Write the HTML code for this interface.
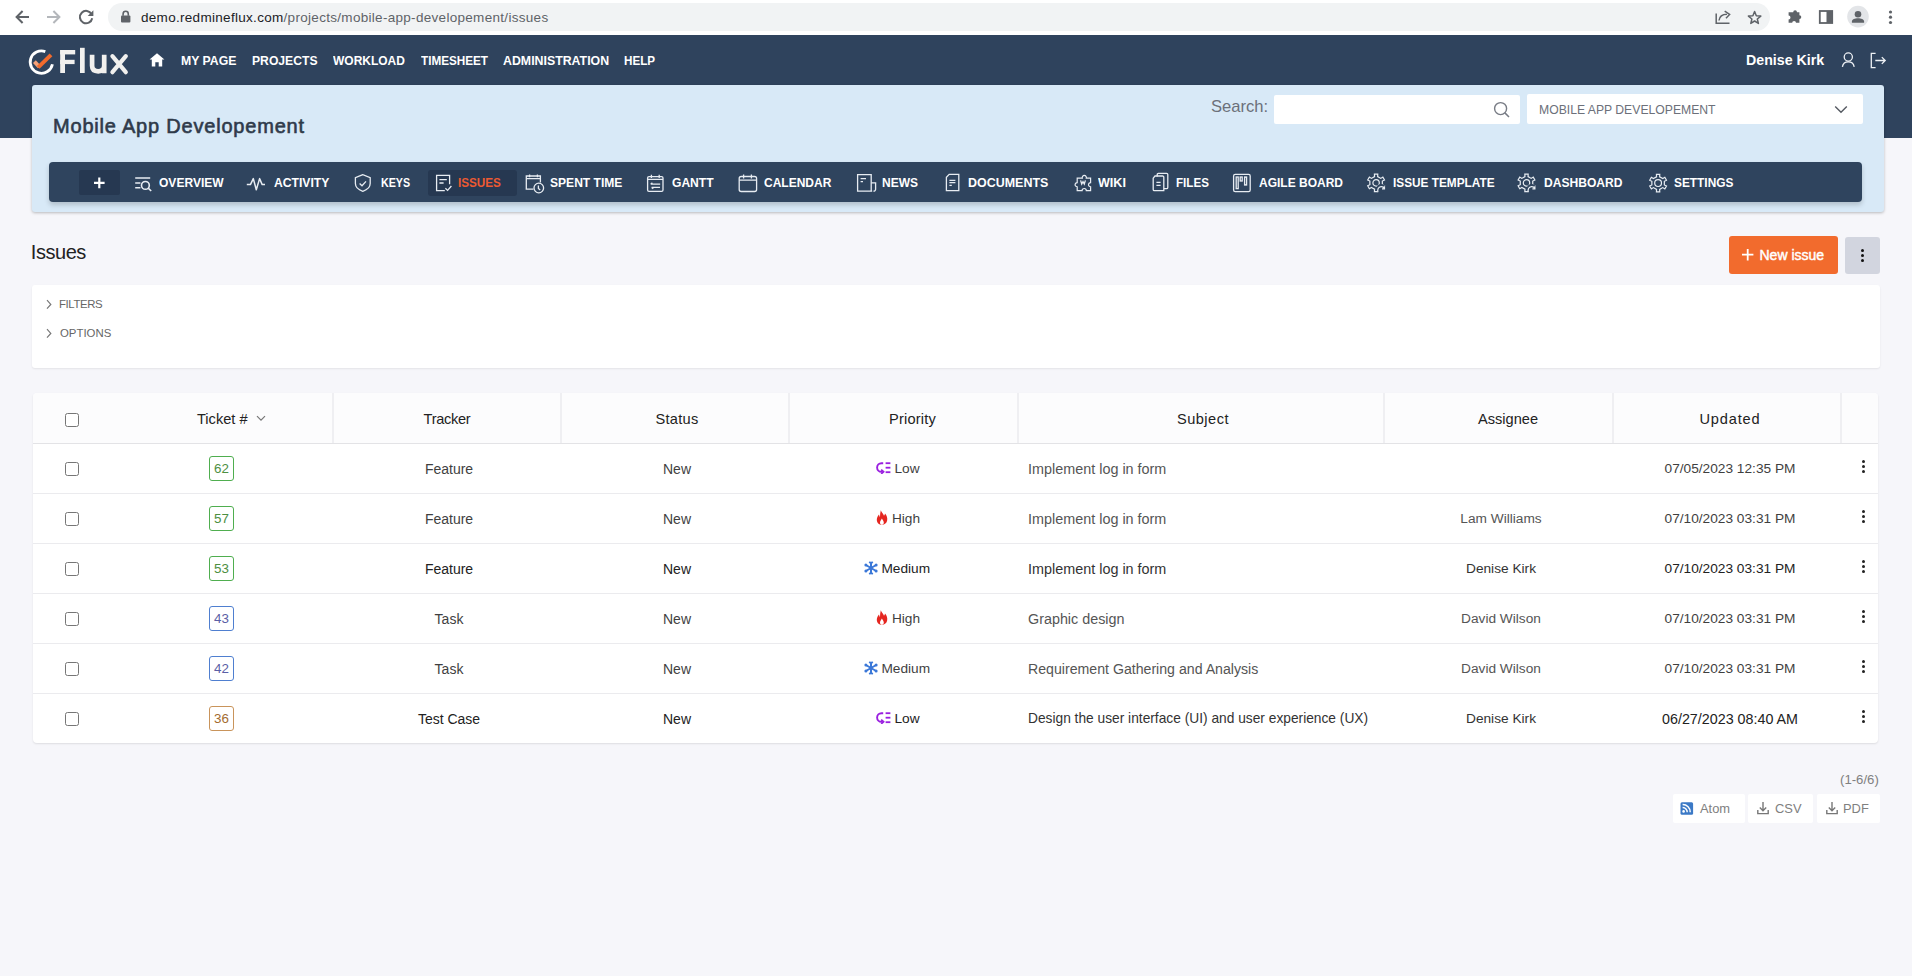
<!DOCTYPE html>
<html><head><meta charset="utf-8">
<style>
*{box-sizing:border-box;margin:0;padding:0}
html,body{width:1912px;height:976px;overflow:hidden}
body{background:#f6f6fa;font-family:"Liberation Sans",sans-serif;position:relative;color:#333}
.a{position:absolute}
.nw{white-space:nowrap}
/* browser chrome */
#chrome{left:0;top:0;width:1912px;height:35px;background:#fff}
#url{left:108px;top:3px;width:1662px;height:28px;background:#f1f3f4;border-radius:14px}
#urltxt{left:141px;top:9.5px;font-size:13.5px;color:#5f6368;letter-spacing:0.3px}
#urltxt b{font-weight:normal;color:#202124}
/* header */
#hdr{left:0;top:35px;width:1912px;height:103px;background:#2f435d}
.nav{transform-origin:0 0;top:53px;font-size:13.3px;font-weight:bold;color:#fff;letter-spacing:0}
/* panel */
#panel{left:32px;top:85px;width:1852px;height:127px;background:#d8e9f7;border-radius:3px;box-shadow:0 1px 3px rgba(0,0,0,.25)}
#ptitle{left:53px;top:115px;font-size:20px;font-weight:normal;color:#2f3a4a;-webkit-text-stroke:0.6px #2f3a4a;letter-spacing:0.8px}
#slabel{left:1211px;top:97.3px;font-size:16.6px;color:#6c707a}
#sinput{left:1274px;top:95px;width:246px;height:29px;background:#fff;border-radius:2px}
#sel{left:1527px;top:94px;width:336px;height:30px;background:#fff;border-radius:2px}
#seltxt{left:1539px;top:103px;font-size:12.2px;color:#6c707a}
#menu{left:49px;top:162px;width:1813px;height:40px;background:#2f445e;border-radius:4px;box-shadow:0 3px 5px rgba(0,0,0,.18)}
.mi{transform-origin:0 0;top:174.9px;font-size:13px;font-weight:bold;color:#fff}
.ic{stroke:#e8edf3;fill:none;stroke-width:1.3}
/* content */
#title{left:30.8px;top:240.6px;font-size:20px;color:#222;letter-spacing:-0.45px}
#newbtn{left:1729px;top:236px;width:109px;height:38px;background:#f26b2d;border-radius:3px}
#kebbtn{left:1844.5px;top:237px;width:35.5px;height:37px;background:#d2d5df;border-radius:3px}
#filters{left:32px;top:285px;width:1848px;height:83px;background:#fff;border-radius:3px;box-shadow:0 1px 2px rgba(0,0,0,.08)}
.flt{font-size:11.4px;color:#666}
/* table */
#tbl{left:33px;top:393px;width:1845px;height:350px;background:#fff;border-radius:4px;box-shadow:0 1px 2px rgba(0,0,0,.1)}
#thead{left:33px;top:393px;width:1845px;height:51px;background:#fcfcfd;border-bottom:1px solid #e3e3e6;border-radius:4px 4px 0 0}
.sep{top:393px;width:2px;height:50px;background:#efeff2}
.rowline{left:33px;width:1845px;height:1px;background:#ebebee}
.th{top:411px;font-size:14.6px;color:#222;text-align:center}
.row{left:33px;width:1845px;height:50px}
.td{top:0.6px;height:50px;line-height:50px;font-size:13.7px;color:#333;text-align:center;white-space:nowrap}
.sj{text-align:left;font-size:14.1px}
.cb{width:13.5px;height:13.5px;border:1.25px solid #767676;border-radius:2.5px;background:#fff}
.badge{width:25px;height:25px;border:1px solid;border-radius:3px;font-size:13.4px;text-align:center;line-height:23px}
.kb{width:3px}
.kb i{display:block;width:3px;height:3px;border-radius:50%;background:#222;margin-bottom:2px}
.foot{font-size:12.5px;color:#808080}
.fbtn{top:794px;height:29px;background:#fff;border-radius:2px}
</style></head><body>

<!-- browser chrome -->
<div id="chrome" class="a"></div>
<div id="url" class="a"></div>
<div id="urltxt" class="a nw"><b>demo.redmineflux.com</b>/projects/mobile-app-developement/issues</div>

<!-- header -->
<div id="hdr" class="a"></div>
<div id="t1" class="a nav nw" style="left:181.40px;transform:scaleX(0.9217)">MY PAGE</div>
<div id="t2" class="a nav nw" style="left:251.80px;transform:scaleX(0.9144)">PROJECTS</div>
<div id="t3" class="a nav nw" style="left:333.20px;transform:scaleX(0.9012)">WORKLOAD</div>
<div id="t4" class="a nav nw" style="left:420.79px;transform:scaleX(0.8806)">TIMESHEET</div>
<div id="t5" class="a nav nw" style="left:503.40px;transform:scaleX(0.9288)">ADMINISTRATION</div>
<div id="t6" class="a nav nw" style="left:624.43px;transform:scaleX(0.8760)">HELP</div>
<div class="a nw" style="left:1746px;top:52px;font-size:14.2px;font-weight:bold;color:#fff">Denise Kirk</div>

<!-- panel -->
<div id="panel" class="a"></div>
<div id="ptitle" class="a nw">Mobile App Developement</div>
<div id="slabel" class="a nw">Search:</div>
<div id="sinput" class="a"></div>
<div id="sel" class="a"></div>
<div id="seltxt" class="a nw">MOBILE APP DEVELOPEMENT</div>
<div id="menu" class="a"></div>
<div class="a" style="left:79px;top:170px;width:41px;height:25px;background:#263851;border-radius:2px"></div>
<div class="a" style="left:428px;top:170px;width:89px;height:26px;background:#263851;border-radius:3px"></div>
<div id="t7" class="a mi nw" style="left:159.30px;transform:scaleX(0.9259)">OVERVIEW</div>
<div id="t8" class="a mi nw" style="left:274.46px;transform:scaleX(0.9336)">ACTIVITY</div>
<div id="t9" class="a mi nw" style="left:380.52px;transform:scaleX(0.8234)">KEYS</div>
<div id="t10" class="a mi nw" style="left:457.71px;transform:scaleX(0.9000);color:#ec5a32">ISSUES</div>
<div id="t11" class="a mi nw" style="left:550.00px;transform:scaleX(0.9282)">SPENT TIME</div>
<div id="t12" class="a mi nw" style="left:672.40px;transform:scaleX(0.9293)">GANTT</div>
<div id="t13" class="a mi nw" style="left:764.23px;transform:scaleX(0.9235)">CALENDAR</div>
<div id="t14" class="a mi nw" style="left:882.00px;transform:scaleX(0.9231)">NEWS</div>
<div id="t15" class="a mi nw" style="left:968.00px;transform:scaleX(0.9595)">DOCUMENTS</div>
<div id="t16" class="a mi nw" style="left:1098.00px;transform:scaleX(0.9655)">WIKI</div>
<div id="t17" class="a mi nw" style="left:1176.00px;transform:scaleX(0.8925)">FILES</div>
<div id="t18" class="a mi nw" style="left:1259.00px;transform:scaleX(0.9231)">AGILE BOARD</div>
<div id="t19" class="a mi nw" style="left:1393.00px;transform:scaleX(0.9089)">ISSUE TEMPLATE</div>
<div id="t20" class="a mi nw" style="left:1544.14px;transform:scaleX(0.9287)">DASHBOARD</div>
<div id="t21" class="a mi nw" style="left:1673.53px;transform:scaleX(0.9130)">SETTINGS</div>

<!-- chrome icons -->
<svg class="a" style="left:0;top:0" width="1912" height="35" viewBox="0 0 1912 35">
 <g fill="none" stroke="#5f6368" stroke-width="2" stroke-linecap="butt">
  <path d="M29 17H17.2M22.6 11L16.6 17L22.6 23"/>
  <path d="M47 17H58.8M53.4 11L59.4 17L53.4 23" stroke="#b4b7bb"/>
  <path d="M91.6 14.2A6.2 6.2 0 1 0 92.2 18.2"/>
 </g>
 <path d="M93.4 10.3V16H87.7Z" fill="#5f6368"/>
 <rect x="121" y="15.6" width="9.4" height="6.8" rx="1" fill="#5f6368"/>
 <path d="M123.1 15.8V13.9A2.6 2.6 0 0 1 128.3 13.9V15.8" fill="none" stroke="#5f6368" stroke-width="1.6"/>
 <g fill="none" stroke="#5f6368" stroke-width="1.5">
  <path d="M1716.2 13.5V23.2H1729.5"/>
  <path d="M1719 20.5C1719.5 16 1722.5 14.2 1727 14.2M1724.7 11.2L1729.6 14.4L1726 18.2"/>
  <path d="M1754.6 11.5L1756.3 15.8L1760.8 16.1L1757.3 19L1758.4 23.4L1754.6 21L1750.8 23.4L1751.9 19L1748.4 16.1L1752.9 15.8Z" stroke-linejoin="round"/>
 </g>
 <path d="M1791 12.2H1793.2A1.9 1.9 0 0 1 1797 12.2H1799.4V15.2A1.9 1.9 0 0 1 1799.4 19V22.8H1796A1.9 1.9 0 0 0 1792.2 22.8H1788.6V19.4A1.9 1.9 0 0 0 1788.6 15.6V12.2Z" fill="#5f6368"/>
 <rect x="1819.8" y="11" width="12.4" height="12" fill="none" stroke="#5f6368" stroke-width="1.8"/>
 <rect x="1826.5" y="11" width="6" height="12" fill="#5f6368"/>
 <circle cx="1858" cy="16.6" r="10.8" fill="#e3e5e8"/>
 <circle cx="1858" cy="14.2" r="3.3" fill="#5f6368"/>
 <path d="M1851.9 22.7V21.6C1851.9 19.2 1855 18.3 1858 18.3C1861 18.3 1864.1 19.2 1864.1 21.6V22.7Z" fill="#5f6368"/>
 <circle cx="1890.5" cy="12" r="1.6" fill="#5f6368"/>
 <circle cx="1890.5" cy="17.2" r="1.6" fill="#5f6368"/>
 <circle cx="1890.5" cy="22.5" r="1.6" fill="#5f6368"/>
</svg>

<!-- logo -->
<svg class="a" style="left:0;top:35px" width="680" height="50" viewBox="0 35 680 50">
 <path d="M45.3 51.6A11.2 11.2 0 1 0 52.4 64.2" fill="none" stroke="#fff" stroke-width="2.8"/>
 <path d="M34.4 61.6L39.4 67" stroke="#f5a27a" stroke-width="3.9" fill="none"/>
 <path d="M38.2 67.4L51 54.8" stroke="#f26b2d" stroke-width="3.9" fill="none"/>
 <g fill="#f1f0ee">
  <rect x="60.2" y="50" width="4.8" height="23"/>
  <rect x="60.2" y="50" width="15" height="4.4"/>
  <rect x="60.2" y="59.8" width="14.4" height="4.3"/>
  <rect x="80" y="47.8" width="4.7" height="25.2"/>
 </g>
 <path d="M92.1 54.8V65.8C92.1 69.5 94.3 71.3 98.2 71.3C102 71.3 104.2 69.5 104.2 65.8V54.8M104.2 60V73.2" fill="none" stroke="#f1f0ee" stroke-width="4.7"/>
 <path d="M112.4 56.2L125.8 72.2M125.8 56.2L112.4 72.2" fill="none" stroke="#f1f0ee" stroke-width="4.2" stroke-linecap="round"/>
 <path d="M157 53.3L149.6 59.6H151.8V66.4H155.3V62.2H158.7V66.4H162.2V59.6H164.4Z" fill="#fff"/>
</svg>

<!-- user / logout -->
<svg class="a" style="left:1836px;top:48px" width="56" height="24" viewBox="1836 48 56 24">
 <g fill="none" stroke="#eef1f5" stroke-width="1.3">
  <circle cx="1848.3" cy="57" r="4.1"/>
  <path d="M1842.4 66.8A6 6 0 0 1 1854.2 66.8"/>
  <path d="M1875.6 53.3H1871.3V67.6H1875.6"/>
  <path d="M1875.3 60.5H1885.2M1881.8 57.1L1885.2 60.5L1881.8 63.9"/>
 </g>
</svg>

<!-- search & select icons -->
<svg class="a" style="left:1490px;top:98px" width="360" height="24" viewBox="1490 98 360 24">
 <circle cx="1500.6" cy="108.6" r="6" fill="none" stroke="#777b84" stroke-width="1.4"/>
 <path d="M1504.9 112.9L1509 117" stroke="#777b84" stroke-width="1.5"/>
 <path d="M1835.2 106.4L1841 112.2L1846.8 106.4" fill="none" stroke="#555a62" stroke-width="1.4"/>
</svg>

<!-- menu icons -->
<svg class="a" style="left:49px;top:162px" width="1813" height="40" viewBox="49 162 1813 40">
 <path d="M99.3 177.6V188.2M94 182.9H104.6" stroke="#fff" stroke-width="2.2"/>
 <g fill="none" stroke="#e7ecf2" stroke-width="1.3">
  <!-- overview -->
  <path d="M135.2 178H150.2M135.2 183H140.4M135.2 187.8H140.4" stroke-width="1.5"/>
  <circle cx="145.4" cy="185.4" r="3.9" stroke-width="1.6"/>
  <path d="M148.2 188.2L151.2 191" stroke-width="1.6"/>
  <!-- activity -->
  <path d="M246.8 184.6H250.4L253.3 178.6L256.3 189.8L259.6 178.6L262.2 184.6H265" stroke-width="1.5" stroke-linejoin="round"/>
  <!-- keys shield -->
  <path d="M362.8 174.6L355.4 177.6V183.6C355.4 187.4 358.8 190 362.8 191.3C366.8 190 370.2 187.4 370.2 183.6V177.6Z"/>
  <path d="M359.6 183.6L362 185.8L366 181.4"/>
  <!-- issues -->
  <path d="M444.8 190.6H436.6V175.4H449.6V184.2"/>
  <path d="M439.4 179.6H446.8M439.4 183H443.6"/>
  <path d="M445.4 188.2L447.6 190.4L451.4 186"/>
  <!-- spent time -->
  <path d="M533.4 189.2H526.3V176H540.4V182.6"/>
  <path d="M526.3 178.6H540.4M529.6 174.6V177.2M537.4 174.6V177.2"/>
  <circle cx="538.8" cy="188" r="4.8"/>
  <path d="M538.4 185.6V188.4L540.2 190"/>
  <!-- gantt -->
  <rect x="647.6" y="176.6" width="15.4" height="14.8" rx="1.4"/>
  <path d="M647.6 179.4H663M651.4 174.8V178M659.2 174.8V178"/>
  <path d="M650.6 184.2H660.2M651.6 187.4H660M652.4 182.9L650.6 184.2M651.6 187.4L653.3 188.7"/>
  <!-- calendar -->
  <rect x="739.2" y="176.5" width="17.4" height="15" rx="2"/>
  <path d="M739.2 180.2H756.6M743.6 174.4V178.4M751.4 174.4V178.4"/>
  <!-- news -->
  <path d="M872.2 191.2H857.6V174.6H871.2V191"/>
  <path d="M871.2 182.8H875.6V189.2A2 2 0 0 1 873.4 191.2"/>
  <path d="M860.6 178.6H866M860.6 181.6H863"/>
  <!-- documents -->
  <path d="M949.2 174.4H958.8V190.6H946.4V177.2Z"/>
  <path d="M949.4 180.4H955.4M949.4 182.6H955.4M949.4 185.4H951.8"/>
  <!-- wiki puzzle -->
  <path d="M1077.2 178.2H1082.3A2.1 2.1 0 1 1 1086.3 178.2H1090.6V182.6A2.1 2.1 0 1 0 1090.6 186.8V190.6H1086.3A2.1 2.1 0 1 0 1082.1 190.6H1077.2V186.8A2.1 2.1 0 1 1 1077.2 182.6Z" stroke-width="1.2"/>
  <path d="M1080.6 180.4L1081.7 184L1083 181.6L1084.3 184L1085.4 180.4" stroke-width="1.3"/>
  <!-- files -->
  <path d="M1157.2 176.4V174.6A1.2 1.2 0 0 1 1158.4 173.4H1166.6A1.2 1.2 0 0 1 1167.8 174.6V187.4A1.2 1.2 0 0 1 1166.6 188.6H1164"/>
  <path d="M1155 176H1162.6A1.2 1.2 0 0 1 1163.8 177.2V190.6H1154.4A1.2 1.2 0 0 1 1153.2 189.4V178.2Z"/>
  <path d="M1156.4 182.4H1160.6M1156.4 185.4H1160.6"/>
  <!-- agile -->
  <rect x="1233.6" y="174.4" width="16.6" height="17.2" rx="1.6"/>
  <rect x="1236.2" y="177" width="2" height="11.6"/>
  <rect x="1240.2" y="177" width="2" height="4"/>
  <rect x="1244.6" y="177" width="2" height="8"/>
 </g>
 <g fill="none" stroke="#e7ecf2" stroke-width="1.2">
  <g transform="translate(1366.6 173.4)"><path d="M7.95 3.19 L7.83 0.76 L11.17 0.76 L11.05 3.19 L14.19 5.00 L16.24 3.68 L17.90 6.57 L15.74 7.69 L15.74 11.31 L17.90 12.43 L16.24 15.32 L14.19 14.00 L11.05 15.81 L11.17 18.24 L7.83 18.24 L7.95 15.81 L4.81 14.00 L2.76 15.32 L1.10 12.43 L3.26 11.31 L3.26 7.69 L1.10 6.57 L2.76 3.68 L4.81 5.00Z"/><circle cx="9.5" cy="9.5" r="3.2"/><circle cx="14.6" cy="15.2" r="4.6" fill="#2f445e" stroke="none"/><path d="M11.4 18.6C10.6 16.2 11.6 13.4 14.4 13.2C16.2 13.1 17.4 14 17.8 15.2M17.9 12.8V15.4H15.4"/></g>
  <g transform="translate(1517 173.4)"><path d="M7.95 3.19 L7.83 0.76 L11.17 0.76 L11.05 3.19 L14.19 5.00 L16.24 3.68 L17.90 6.57 L15.74 7.69 L15.74 11.31 L17.90 12.43 L16.24 15.32 L14.19 14.00 L11.05 15.81 L11.17 18.24 L7.83 18.24 L7.95 15.81 L4.81 14.00 L2.76 15.32 L1.10 12.43 L3.26 11.31 L3.26 7.69 L1.10 6.57 L2.76 3.68 L4.81 5.00Z"/><circle cx="9.5" cy="9.5" r="3.2"/><circle cx="14.6" cy="15.2" r="4.6" fill="#2f445e" stroke="none"/><path d="M11.4 18.6C10.6 16.2 11.6 13.4 14.4 13.2C16.2 13.1 17.4 14 17.8 15.2M17.9 12.8V15.4H15.4"/></g>
  <g transform="translate(1648.6 173.6)"><path d="M7.95 3.19 L7.83 0.76 L11.17 0.76 L11.05 3.19 L14.19 5.00 L16.24 3.68 L17.90 6.57 L15.74 7.69 L15.74 11.31 L17.90 12.43 L16.24 15.32 L14.19 14.00 L11.05 15.81 L11.17 18.24 L7.83 18.24 L7.95 15.81 L4.81 14.00 L2.76 15.32 L1.10 12.43 L3.26 11.31 L3.26 7.69 L1.10 6.57 L2.76 3.68 L4.81 5.00Z"/><circle cx="9.5" cy="9.5" r="3.4"/></g>
 </g>
</svg>

<!-- content -->
<div id="title" class="a nw">Issues</div>
<div id="newbtn" class="a"></div>
<div class="a nw" style="left:1759.5px;top:246.5px;font-size:14px;font-weight:normal;color:#fff;-webkit-text-stroke:0.45px #fff">New issue</div>
<div id="kebbtn" class="a"></div>
<div id="filters" class="a"></div>
<div class="a flt nw" style="left:59px;top:298px;letter-spacing:-0.4px">FILTERS</div>
<div class="a flt nw" style="left:60px;top:327px">OPTIONS</div>

<svg class="a" style="left:1740px;top:246px" width="16" height="16" viewBox="1740 246 16 16"><path d="M1747.7 249V260.4M1742 254.7H1753.4" stroke="#fff" stroke-width="1.8"/></svg>
<div class="a" style="left:1861px;top:249px;width:3px"><i style="display:block;width:3px;height:3px;border-radius:50%;background:#111;margin-bottom:2px"></i><i style="display:block;width:3px;height:3px;border-radius:50%;background:#111;margin-bottom:2px"></i><i style="display:block;width:3px;height:3px;border-radius:50%;background:#111"></i></div>
<svg class="a" style="left:44px;top:296px" width="12" height="44" viewBox="44 296 12 44"><path d="M47 300.2L50.8 304.4L47 308.6M47 329.2L50.8 333.4L47 337.6" fill="none" stroke="#777" stroke-width="1.2"/></svg>
<!-- table -->
<div id="tbl" class="a"></div>
<div id="thead" class="a"></div>
<div class="a sep" style="left:332px"></div>
<div class="a sep" style="left:560px"></div>
<div class="a sep" style="left:788px"></div>
<div class="a sep" style="left:1017px"></div>
<div class="a sep" style="left:1383px"></div>
<div class="a sep" style="left:1612px"></div>
<div class="a sep" style="left:1840px"></div>
<div class="a cb" style="left:65px;top:413px"></div>
<div class="a th nw" style="left:197px">Ticket #</div>
<svg class="a" style="left:256px;top:415px" width="10" height="7" viewBox="0 0 10 7"><path d="M1 1.2L5 5.2L9 1.2" fill="none" stroke="#777" stroke-width="1.2"/></svg>
<div class="a th nw" style="left:333px;width:228px;letter-spacing:-0.3px">Tracker</div>
<div class="a th nw" style="left:561px;width:232px;letter-spacing:0.3px">Status</div>
<div class="a th nw" style="left:789px;width:247px;letter-spacing:0.2px">Priority</div>
<div class="a th nw" style="left:1018px;width:370px;letter-spacing:0.5px">Subject</div>
<div class="a th nw" style="left:1384px;width:248px">Assignee</div>
<div class="a th nw" style="left:1613px;width:234px;letter-spacing:0.85px">Updated</div>

<!--ROWS-->
<div class="a row" style="top:443px">
<div class="a cb" style="left:32px;top:19px"></div>
<div class="a badge" style="left:176px;top:13px;border-color:#4fae4f;color:#4d8f42">62</div>
<div class="a td" style="left:300px;width:232px;color:#3f3f3f;font-size:14px">Feature</div>
<div class="a td" style="left:528px;width:232px;color:#3f3f3f;font-size:14px">New</div>
<div class="a td" style="left:749px;width:232px;color:#3f3f3f"><svg width="15" height="12" viewBox="0 0 15 12" style="vertical-align:-1px;margin-right:3px"><path d="M7.2 1.2H5.4A4.3 4.3 0 0 0 5.4 9.8H6.4" fill="none" stroke="#9a1fe0" stroke-width="1.9"/><path d="M5.2 7.6L7.6 9.8L5.2 11.9" fill="none" stroke="#9a1fe0" stroke-width="1.7"/><rect x="9.6" y="0.3" width="4.8" height="1.8" fill="#9a1fe0"/><rect x="9.6" y="4.8" width="4.8" height="1.8" fill="#9a1fe0"/><rect x="9.6" y="9.3" width="4.8" height="1.8" fill="#9a1fe0"/></svg>Low</div>
<div class="a td sj" style="left:995px;color:#555;font-size:14.4px">Implement log in form</div>
<div class="a td" style="left:1581px;width:232px;color:#3f3f3f;font-size:13.7px">07/05/2023 12:35 PM</div>
<div class="a kb" style="left:1829px;top:17px"><i></i><i></i><i></i></div>
</div>
<div class="a rowline" style="top:493px"></div>
<div class="a row" style="top:493px">
<div class="a cb" style="left:32px;top:19px"></div>
<div class="a badge" style="left:176px;top:13px;border-color:#4fae4f;color:#4d8f42">57</div>
<div class="a td" style="left:300px;width:232px;color:#3f3f3f;font-size:14px">Feature</div>
<div class="a td" style="left:528px;width:232px;color:#3f3f3f;font-size:14px">New</div>
<div class="a td" style="left:749px;width:232px;color:#3f3f3f"><svg width="12" height="15" viewBox="0 0 12 15" style="vertical-align:-2px;margin-right:4px"><path d="M4.8 0.3C5.6 2.6 7.2 3.8 8 5.8C8.6 5 8.9 4.2 9 3.4C10.8 5.2 11.6 7.8 11.2 10.2C10.8 13 8.6 14.8 6 14.8C3 14.8 0.8 12.8 0.8 9.8C0.8 7.6 2 6 3 4.6C3.2 5.6 3.5 6.6 4 7.2C4 4.8 4.2 2.6 4.8 0.3Z" fill="#e52620"/><path d="M5.9 8.6C6.6 10 7.8 11 7.8 12.6C7.8 13.9 7 14.9 5.9 14.9C4.8 14.9 4 13.9 4 12.6C4 11 5.2 10 5.9 8.6Z" fill="#fff"/></svg>High</div>
<div class="a td sj" style="left:995px;color:#555;font-size:14.4px">Implement log in form</div>
<div class="a td" style="left:1352px;width:232px;color:#555">Lam Williams</div>
<div class="a td" style="left:1581px;width:232px;color:#3f3f3f;font-size:13.7px">07/10/2023 03:31 PM</div>
<div class="a kb" style="left:1829px;top:17px"><i></i><i></i><i></i></div>
</div>
<div class="a rowline" style="top:543px"></div>
<div class="a row" style="top:543px">
<div class="a cb" style="left:32px;top:19px"></div>
<div class="a badge" style="left:176px;top:13px;border-color:#4fae4f;color:#4d8f42">53</div>
<div class="a td" style="left:300px;width:232px;color:#222;font-size:14px">Feature</div>
<div class="a td" style="left:528px;width:232px;color:#222;font-size:14px">New</div>
<div class="a td" style="left:749px;width:232px;color:#222"><svg width="14" height="14" viewBox="0 0 14 14" style="vertical-align:-2px;margin-right:3.5px;margin-left:-2px"><g stroke="#3b78d8" stroke-width="2" fill="none"><path d="M7 0.8V13.2M1.8 4L12.2 10M1.8 10L12.2 4"/><path d="M5.2 0.9L7 2.6L8.8 0.9M5.2 13.1L7 11.4L8.8 13.1" stroke-width="1.5"/></g><g fill="#3b78d8"><circle cx="1.9" cy="4" r="1.5"/><circle cx="12.1" cy="4" r="1.5"/><circle cx="1.9" cy="10" r="1.5"/><circle cx="12.1" cy="10" r="1.5"/><circle cx="7" cy="7" r="2"/></g></svg>Medium</div>
<div class="a td sj" style="left:995px;color:#333;font-size:14.4px">Implement log in form</div>
<div class="a td" style="left:1352px;width:232px;color:#333">Denise Kirk</div>
<div class="a td" style="left:1581px;width:232px;color:#222;font-size:13.7px">07/10/2023 03:31 PM</div>
<div class="a kb" style="left:1829px;top:17px"><i></i><i></i><i></i></div>
</div>
<div class="a rowline" style="top:593px"></div>
<div class="a row" style="top:593px">
<div class="a cb" style="left:32px;top:19px"></div>
<div class="a badge" style="left:176px;top:13px;border-color:#4f7fd0;color:#5a5fa6">43</div>
<div class="a td" style="left:300px;width:232px;color:#3f3f3f;font-size:14px">Task</div>
<div class="a td" style="left:528px;width:232px;color:#3f3f3f;font-size:14px">New</div>
<div class="a td" style="left:749px;width:232px;color:#3f3f3f"><svg width="12" height="15" viewBox="0 0 12 15" style="vertical-align:-2px;margin-right:4px"><path d="M4.8 0.3C5.6 2.6 7.2 3.8 8 5.8C8.6 5 8.9 4.2 9 3.4C10.8 5.2 11.6 7.8 11.2 10.2C10.8 13 8.6 14.8 6 14.8C3 14.8 0.8 12.8 0.8 9.8C0.8 7.6 2 6 3 4.6C3.2 5.6 3.5 6.6 4 7.2C4 4.8 4.2 2.6 4.8 0.3Z" fill="#e52620"/><path d="M5.9 8.6C6.6 10 7.8 11 7.8 12.6C7.8 13.9 7 14.9 5.9 14.9C4.8 14.9 4 13.9 4 12.6C4 11 5.2 10 5.9 8.6Z" fill="#fff"/></svg>High</div>
<div class="a td sj" style="left:995px;color:#555;font-size:14.35px">Graphic design</div>
<div class="a td" style="left:1352px;width:232px;color:#555">David Wilson</div>
<div class="a td" style="left:1581px;width:232px;color:#3f3f3f;font-size:13.7px">07/10/2023 03:31 PM</div>
<div class="a kb" style="left:1829px;top:17px"><i></i><i></i><i></i></div>
</div>
<div class="a rowline" style="top:643px"></div>
<div class="a row" style="top:643px">
<div class="a cb" style="left:32px;top:19px"></div>
<div class="a badge" style="left:176px;top:13px;border-color:#4f7fd0;color:#5a5fa6">42</div>
<div class="a td" style="left:300px;width:232px;color:#3f3f3f;font-size:14px">Task</div>
<div class="a td" style="left:528px;width:232px;color:#3f3f3f;font-size:14px">New</div>
<div class="a td" style="left:749px;width:232px;color:#3f3f3f"><svg width="14" height="14" viewBox="0 0 14 14" style="vertical-align:-2px;margin-right:3.5px;margin-left:-2px"><g stroke="#3b78d8" stroke-width="2" fill="none"><path d="M7 0.8V13.2M1.8 4L12.2 10M1.8 10L12.2 4"/><path d="M5.2 0.9L7 2.6L8.8 0.9M5.2 13.1L7 11.4L8.8 13.1" stroke-width="1.5"/></g><g fill="#3b78d8"><circle cx="1.9" cy="4" r="1.5"/><circle cx="12.1" cy="4" r="1.5"/><circle cx="1.9" cy="10" r="1.5"/><circle cx="12.1" cy="10" r="1.5"/><circle cx="7" cy="7" r="2"/></g></svg>Medium</div>
<div class="a td sj" style="left:995px;color:#555;font-size:14.15px">Requirement Gathering and Analysis</div>
<div class="a td" style="left:1352px;width:232px;color:#555">David Wilson</div>
<div class="a td" style="left:1581px;width:232px;color:#3f3f3f;font-size:13.7px">07/10/2023 03:31 PM</div>
<div class="a kb" style="left:1829px;top:17px"><i></i><i></i><i></i></div>
</div>
<div class="a rowline" style="top:693px"></div>
<div class="a row" style="top:693px">
<div class="a cb" style="left:32px;top:19px"></div>
<div class="a badge" style="left:176px;top:13px;border-color:#c9945b;color:#a36b2f">36</div>
<div class="a td" style="left:300px;width:232px;color:#222;font-size:14px">Test Case</div>
<div class="a td" style="left:528px;width:232px;color:#222;font-size:14px">New</div>
<div class="a td" style="left:749px;width:232px;color:#222"><svg width="15" height="12" viewBox="0 0 15 12" style="vertical-align:-1px;margin-right:3px"><path d="M7.2 1.2H5.4A4.3 4.3 0 0 0 5.4 9.8H6.4" fill="none" stroke="#9a1fe0" stroke-width="1.9"/><path d="M5.2 7.6L7.6 9.8L5.2 11.9" fill="none" stroke="#9a1fe0" stroke-width="1.7"/><rect x="9.6" y="0.3" width="4.8" height="1.8" fill="#9a1fe0"/><rect x="9.6" y="4.8" width="4.8" height="1.8" fill="#9a1fe0"/><rect x="9.6" y="9.3" width="4.8" height="1.8" fill="#9a1fe0"/></svg>Low</div>
<div class="a td sj" style="left:995px;color:#333;font-size:13.75px">Design the user interface (UI) and user experience (UX)</div>
<div class="a td" style="left:1352px;width:232px;color:#333">Denise Kirk</div>
<div class="a td" style="left:1581px;width:232px;color:#222;font-size:14.3px">06/27/2023 08:40 AM</div>
<div class="a kb" style="left:1829px;top:17px"><i></i><i></i><i></i></div>
</div>
<!--/ROWS-->
<!-- footer -->
<div class="a foot nw" style="left:1840px;top:772px;font-size:13.2px">(1-6/6)</div>
<div class="a fbtn" style="left:1673px;width:72px"></div>
<div class="a fbtn" style="left:1748px;width:65px"></div>
<div class="a fbtn" style="left:1817px;width:63px"></div>
<svg class="a" style="left:1680px;top:802px" width="14" height="13" viewBox="0 0 14 13"><rect x="0.5" y="0.3" width="12.6" height="12.4" rx="1.5" fill="#3b79c6"/><circle cx="3.6" cy="9.4" r="1.3" fill="#fff"/><path d="M2.6 5.6A4.4 4.4 0 0 1 7.2 10.3M2.6 2.6A7.4 7.4 0 0 1 10.2 10.3" fill="none" stroke="#fff" stroke-width="1.5"/></svg>
<div class="a foot nw" style="left:1700px;top:801px;font-size:12.9px">Atom</div>
<svg class="a" style="left:1756px;top:801px" width="14" height="14" viewBox="0 0 14 14"><path d="M7 1V9.6M3.8 6.6L7 9.8L10.2 6.6M1.8 9V12.6H12.2V9" fill="none" stroke="#777" stroke-width="1.4"/></svg>
<div class="a foot nw" style="left:1775px;top:801px;font-size:12.9px">CSV</div>
<svg class="a" style="left:1825px;top:801px" width="14" height="14" viewBox="0 0 14 14"><path d="M7 1V9.6M3.8 6.6L7 9.8L10.2 6.6M1.8 9V12.6H12.2V9" fill="none" stroke="#777" stroke-width="1.4"/></svg>
<div class="a foot nw" style="left:1843px;top:801px;font-size:12.9px">PDF</div>
</body></html>
